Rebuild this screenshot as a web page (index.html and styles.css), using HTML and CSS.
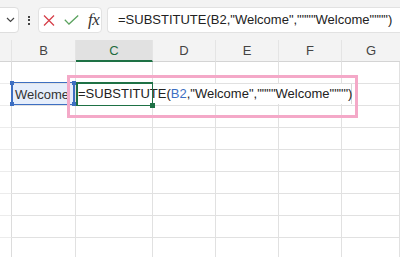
FILE: index.html
```html
<!DOCTYPE html>
<html lang="en">
<head>
    <meta charset="UTF-8">
    <meta name="viewport" content="width=device-width, initial-scale=1.0">
    <title>SUBSTITUTE quotes</title>
    <link rel="stylesheet" href="styles.css">
</head>
<body>
    <div class="topbar">
        <div class="namebox">
            <svg width="9" height="6" viewBox="0 0 9 6"><path d="M1 1l3.5 3.5L8 1" fill="none" stroke="#444" stroke-width="1.2"/></svg>
        </div>
        <div class="dots"><span></span><span></span><span></span></div>
        <div class="actions">
            <svg class="cancel" width="12" height="11" viewBox="0 0 12 11"><path d="M1 0.5l10 10M11 0.5l-10 10" stroke="#d6404a" stroke-width="1.3" fill="none"/></svg>
            <svg class="enter" width="15" height="10" viewBox="0 0 15 10"><path d="M0.8 4.8l4.2 4.3L14.2 0.6" stroke="#5ba35f" stroke-width="1.3" fill="none"/></svg>
            <span class="fx">fx</span>
        </div>
        <div class="formula">=SUBSTITUTE(B2,"Welcome",""""Welcome"""")</div>
    </div>

    <div class="sheet">
        <div class="row head">
            <div class="cell corner"></div>
            <div class="cell">B</div>
            <div class="cell active">C</div>
            <div class="cell">D</div>
            <div class="cell">E</div>
            <div class="cell">F</div>
            <div class="cell">G</div>
        </div>
        <div class="row"><div class="cell rh"></div><div class="cell"></div><div class="cell"></div><div class="cell"></div><div class="cell"></div><div class="cell"></div><div class="cell"></div></div>
        <div class="row"><div class="cell rh"></div><div class="cell ref">Welcome</div><div class="cell"></div><div class="cell"></div><div class="cell"></div><div class="cell"></div><div class="cell"></div></div>
        <div class="row"><div class="cell rh"></div><div class="cell"></div><div class="cell"></div><div class="cell"></div><div class="cell"></div><div class="cell"></div><div class="cell"></div></div>
        <div class="row"><div class="cell rh"></div><div class="cell"></div><div class="cell"></div><div class="cell"></div><div class="cell"></div><div class="cell"></div><div class="cell"></div></div>
        <div class="row"><div class="cell rh"></div><div class="cell"></div><div class="cell"></div><div class="cell"></div><div class="cell"></div><div class="cell"></div><div class="cell"></div></div>
        <div class="row"><div class="cell rh"></div><div class="cell"></div><div class="cell"></div><div class="cell"></div><div class="cell"></div><div class="cell"></div><div class="cell"></div></div>
        <div class="row"><div class="cell rh"></div><div class="cell"></div><div class="cell"></div><div class="cell"></div><div class="cell"></div><div class="cell"></div><div class="cell"></div></div>
        <div class="row"><div class="cell rh"></div><div class="cell"></div><div class="cell"></div><div class="cell"></div><div class="cell"></div><div class="cell"></div><div class="cell"></div></div>
        <div class="row"><div class="cell rh"></div><div class="cell"></div><div class="cell"></div><div class="cell"></div><div class="cell"></div><div class="cell"></div><div class="cell"></div></div>

        <!-- B2 reference outline -->
        <div class="refbox">
            <i class="h tl"></i><i class="h tr"></i><i class="h bl"></i><i class="h br"></i>
        </div>
        <!-- in-cell editor -->
        <div class="editor">=SUBSTITUTE(<span class="refname">B2</span>,"Welcome",""""Welcome"""")</div>
        <div class="editcell"><i class="fill"></i></div>
        <!-- annotation -->
        <div class="mark"></div>
    </div>
</body>
</html>
```

FILE: styles.css
```css
body {
    margin: 0;
    width: 400px;
    height: 257px;
    overflow: hidden;
    font-family: 'Liberation Sans', Arial, sans-serif;
    background: #fff;
    color: #222;
}

.topbar {
    height: 40px;
    box-sizing: border-box;
    padding-top: 7px;
    background: #f3f3f3;
    display: flex;
    align-items: flex-start;
    overflow: hidden;
}

.topbar > div {
    flex-shrink: 0;
}

.namebox {
    width: 30px;
    height: 26px;
    box-sizing: border-box;
    margin-left: -11px;
    background: #fff;
    border: 1px solid #dedede;
    border-radius: 4px;
    display: flex;
    justify-content: flex-end;
    align-items: center;
    padding-right: 3px;
}

.dots {
    width: 19px;
    height: 26px;
    display: flex;
    flex-direction: column;
    align-items: center;
    justify-content: center;
    gap: 1.5px;
}

.dots span {
    width: 2px;
    height: 2px;
    background: #444;
}

.actions {
    width: 64px;
    height: 26px;
    box-sizing: border-box;
    background: #fff;
    border: 1px solid #e2e2e2;
    border-radius: 4px;
    display: flex;
    align-items: center;
    padding-left: 4px;
}

.actions .enter {
    margin-left: 9px;
}

.fx {
    margin-left: 9px;
    font-family: 'Liberation Serif', 'Times New Roman', serif;
    font-style: italic;
    font-size: 17px;
    line-height: 20px;
    color: #333;
    letter-spacing: -0.5px;
}

.topbar > .formula {
    flex: 1 0 0;
    height: 26px;
    box-sizing: border-box;
    margin-left: 5px;
    background: #fff;
    border: 1px solid #e2e2e2;
    border-right: none;
    border-radius: 4px 0 0 4px;
    padding-left: 10px;
    font-size: 13px;
    line-height: 24px;
    color: #222;
    white-space: nowrap;
    overflow: hidden;
}

.sheet {
    position: relative;
}

.row {
    display: grid;
    grid-template-columns: 12px 64px 77px 63px 63px 63px 58px;
    height: 22px;
}

.cell {
    box-sizing: border-box;
    border-right: 1px solid #e1e1e1;
    border-bottom: 1px solid #e1e1e1;
    font-size: 13px;
    line-height: 21px;
    white-space: nowrap;
    overflow: hidden;
}

.cell.rh {
    border-bottom-color: #ececec;
    border-right-color: #dcdcdc;
}

.head .cell {
    background: #f3f3f3;
    text-align: center;
    color: #444;
    border-right-color: #e4e4e4;
    border-bottom-color: #d4d4d4;
}

.head .cell:last-child {
    border-right: none;
}

.head .cell.active {
    background: #e1e1e1;
    color: #1f6b3d;
    border-bottom: 2px solid #1e7145;
}

.cell.ref {
    background: #e6eefb;
    padding-left: 3px;
    color: #333;
}

.refbox {
    position: absolute;
    left: 11px;
    top: 42px;
    width: 64px;
    height: 23px;
    box-sizing: border-box;
    border: 1px solid #3d6fc2;
    border-left-width: 2px;
    border-right-width: 2px;
}

.refbox .h {
    position: absolute;
    width: 4px;
    height: 4px;
    background: #3d6fc2;
}

.refbox .tl { left: -3px; top: -2px; }
.refbox .tr { right: -3px; top: -2px; }
.refbox .bl { left: -3px; bottom: -2px; }
.refbox .br { right: -3px; bottom: -2px; }

.editor {
    position: absolute;
    left: 77px;
    top: 44px;
    width: 275px;
    height: 20px;
    box-sizing: border-box;
    background: #fff;
    border-right: 1px solid #d6d6d6;
    padding-left: 1px;
    font-size: 13px;
    line-height: 20px;
    color: #222;
    white-space: nowrap;
}

.refname {
    color: #3d6fc2;
}

.editcell {
    position: absolute;
    left: 76px;
    top: 42px;
    width: 77px;
    height: 24px;
    box-sizing: border-box;
    border: 2px solid #1e7145;
    border-right-width: 1px;
    border-bottom-width: 1px;
}

.editcell .fill {
    position: absolute;
    right: -3px;
    bottom: -3px;
    width: 5px;
    height: 5px;
    background: #1e7145;
}

.mark {
    position: absolute;
    left: 67px;
    top: 35px;
    width: 291px;
    height: 43px;
    box-sizing: border-box;
    border: 3px solid #f4a9c8;
}
```
